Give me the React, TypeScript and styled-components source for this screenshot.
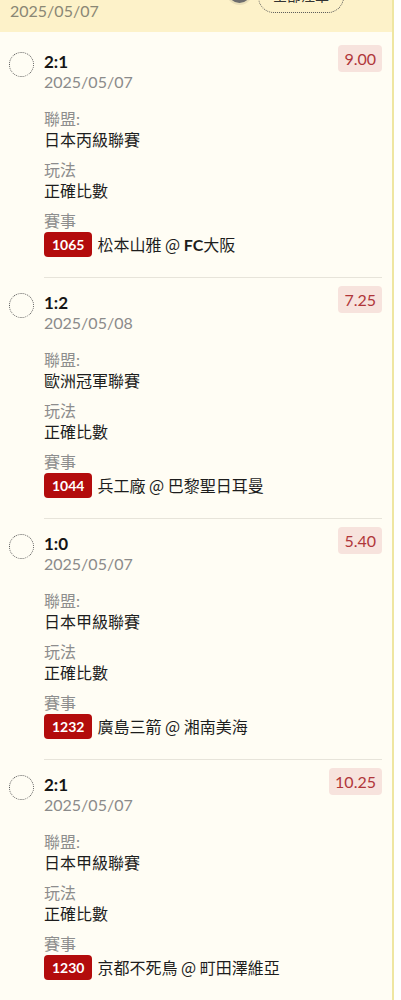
import styled, { createGlobalStyle } from "styled-components";

type Bet = {
  id: number;
  score: string;
  date: string;
  league: string;
  play: string;
  code: string;
  match: string;
  odds: string;
};

const bets: Bet[] = [
  { id: 1, score: "2:1", date: "2025/05/07", league: "日本丙級聯賽", play: "正確比數", code: "1065", match: "松本山雅 @ FC大阪", odds: "9.00" },
  { id: 2, score: "1:2", date: "2025/05/08", league: "歐洲冠軍聯賽", play: "正確比數", code: "1044", match: "兵工廠 @ 巴黎聖日耳曼", odds: "7.25" },
  { id: 3, score: "1:0", date: "2025/05/07", league: "日本甲級聯賽", play: "正確比數", code: "1232", match: "廣島三箭 @ 湘南美海", odds: "5.40" },
  { id: 4, score: "2:1", date: "2025/05/07", league: "日本甲級聯賽", play: "正確比數", code: "1230", match: "京都不死鳥 @ 町田澤維亞", odds: "10.25" },
];

const GlobalStyle = createGlobalStyle`
  body {
    margin: 0;
    background: #ffffff;
    font-family: Lato, "Noto Sans CJK TC", sans-serif;
    overflow: hidden;
  }
`;

// splits latin runs out so they can be drawn heavier, as in the team names
const renderMatch = (text: string) =>
  text.split(/([A-Za-z]+)/).map((part, i) =>
    /^[A-Za-z]+$/.test(part) ? <Latin key={i}>{part}</Latin> : part
  );

const App = () => {
  return (
    <>
      <GlobalStyle />
      <Panel>
        <Header>
          <div>
            <Title>投注記錄</Title>
            <HeaderDate>2025/05/07</HeaderDate>
          </div>
          <HeaderTools>
            <RoundIcon />
            <FilterButton>全部注單</FilterButton>
          </HeaderTools>
        </Header>
        <List>
          {bets.map((bet) => (
            <Card key={bet.id}>
              <Check />
              <Body>
                <TopRow>
                  <Info>
                    <Score>{bet.score}</Score>
                    <BetDate>{bet.date}</BetDate>
                  </Info>
                  <Odds>{bet.odds}</Odds>
                </TopRow>
                <Fields>
                  <Field>
                    <Label>聯盟:</Label>
                    <Value>{bet.league}</Value>
                  </Field>
                  <Field>
                    <Label>玩法</Label>
                    <Value>{bet.play}</Value>
                  </Field>
                  <Field>
                    <Label>賽事</Label>
                    <MatchRow>
                      <Code>{bet.code}</Code>
                      <MatchName>{renderMatch(bet.match)}</MatchName>
                    </MatchRow>
                  </Field>
                </Fields>
              </Body>
            </Card>
          ))}
        </List>
      </Panel>
    </>
  );
};

const Panel = styled.div`
  width: 392px;
  min-height: 1040px;
  margin-top: -33px;
  background: #fffdf4;
  border-right: 2px solid #efe6a2;
`;

const Header = styled.div`
  display: flex;
  justify-content: space-between;
  align-items: flex-start;
  padding: 10px 10px 11px;
  background: #fdf2c9;
`;

const Title = styled.div`
  font-size: 18px;
  font-weight: 700;
  line-height: 24px;
  color: #333;
`;

const HeaderDate = styled.div`
  font-size: 16px;
  line-height: 20px;
  color: #8a8775;
`;

const HeaderTools = styled.div`
  display: flex;
  align-items: center;
  gap: 7px;
  margin-top: 3px;
  margin-right: 38px;
`;

const RoundIcon = styled.div`
  width: 17px;
  height: 17px;
  margin-bottom: 10px;
  border-radius: 50%;
  border: 3px solid #6d6d6d;
  background: #e4e4e4;
  box-shadow: 0 0 0 2px rgba(0, 0, 0, 0.08);
`;

const FilterButton = styled.div`
  box-sizing: border-box;
  width: 86px;
  height: 32px;
  border: 1px dotted #555;
  border-radius: 16px;
  font-size: 14px;
  line-height: 28px;
  text-align: center;
  color: #333;
`;

const List = styled.div`
  padding: 5px 10px 0 9px;
`;

const Card = styled.div`
  display: flex;
  gap: 10px;
`;

const Check = styled.div`
  flex: none;
  box-sizing: border-box;
  width: 25px;
  height: 25px;
  margin-top: 15px;
  border-radius: 50%;
  border: 1px dotted #555;
`;

const Body = styled.div`
  flex: 1;
  padding: 8px 0 20px;
  border-bottom: 1px solid #e7e4da;
`;

const TopRow = styled.div`
  display: flex;
  justify-content: space-between;
  align-items: flex-start;
`;

const Info = styled.div`
  margin-top: 7px;
`;

const Score = styled.div`
  font-size: 17px;
  font-weight: 700;
  line-height: 20px;
  color: #151515;
`;

const BetDate = styled.div`
  font-size: 16px;
  line-height: 20px;
  color: #8b8b8b;
`;

const Odds = styled.div`
  padding: 4px 6px;
  border-radius: 4px;
  background: #f7e3dd;
  color: #b0363a;
  font-size: 16px;
  line-height: 19px;
`;

const Fields = styled.div`
  display: flex;
  flex-direction: column;
  gap: 9px;
  margin-top: 16px;
`;

const Field = styled.div`
  display: flex;
  flex-direction: column;
`;

const Label = styled.div`
  font-size: 16px;
  line-height: 21px;
  color: #8d8d8d;
`;

const Value = styled.div`
  font-size: 16px;
  line-height: 21px;
  color: #1d1d1d;
`;

const MatchRow = styled.div`
  display: flex;
  align-items: center;
  gap: 5px;
  margin-top: 1px;
`;

const MatchName = styled.div`
  font-family: "Noto Sans CJK TC", sans-serif;
  font-size: 16px;
  line-height: 21px;
  color: #1d1d1d;
`;

const Latin = styled.span`
  font-family: Lato, sans-serif;
  font-weight: 700;
`;

const Code = styled.div`
  height: 25px;
  padding: 0 8px;
  border-radius: 4px;
  background: #b30c0c;
  color: #fff;
  font-size: 14px;
  font-weight: 700;
  line-height: 25px;
`;

export default App;
